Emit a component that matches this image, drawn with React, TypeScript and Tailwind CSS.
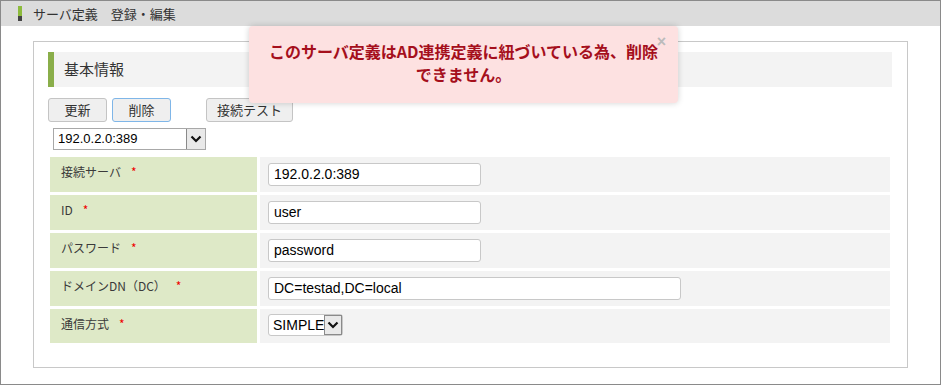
import * as React from "react";

const ROWS = [
  { label: "接続サーバ", value: "192.0.2.0:389", w: "w-[213px]" },
  { label: "ID", value: "user", w: "w-[213px]" },
  { label: "パスワード", value: "password", w: "w-[213px]" },
  { label: "ドメインDN（DC）", value: "DC=testad,DC=local", w: "w-[413px]" },
];

function Chevron() {
  return (
    <svg width="12" height="8" viewBox="0 0 12 8" fill="none">
      <path d="M1.5 1.5 6 6l4.5-4.5" stroke="#111" strokeWidth="2.2" />
    </svg>
  );
}

export default function App() {
  return (
    <div className="relative h-[385px] w-[941px] overflow-hidden border border-[#8a8a8a] bg-white font-['Noto_Sans_CJK_JP',sans-serif] text-[#333]">
      <div className="flex h-[25px] items-center bg-[#dcdcdc] pl-[17px]">
        <div className="flex h-[15px] w-[4px] flex-col">
          <div className="h-[10px] bg-[#8dbb3c]" />
          <div className="h-[5px] bg-[#444]" />
        </div>
        <span className="ml-[11px] text-[13px] leading-none">サーバ定義　登録・編集</span>
      </div>

      <div className="ml-[32px] mt-[15px] h-[327px] w-[875px] border border-[#c8c8c8] pl-[14px] pt-[10px]">
        <div className="flex h-[35px] w-[844px] items-center border-l-[6px] border-[#8aae4a] bg-[#f3f3f3] pl-[10px] text-[15px]">
          基本情報
        </div>

        <div className="mt-[11px] flex h-[24px] text-[13px]">
          <button className="w-[59px] rounded-[3px] border border-[#c4c4c4] bg-[#efefef]">更新</button>
          <button className="ml-[5px] w-[59px] rounded-[3px] border border-[#7fb6e8] bg-[#efefef]">削除</button>
          <button className="ml-[35px] w-[87px] rounded-[3px] border border-[#c4c4c4] bg-[#efefef]">接続テスト</button>
        </div>

        <div className="ml-[5px] mt-[6px] flex h-[22px] w-[153px] border border-[#a8a8a8] font-['Liberation_Sans',sans-serif] text-[13px] text-black">
          <span className="flex flex-1 items-center pl-[4px]">192.0.2.0:389</span>
          <span className="flex w-[19px] items-center justify-center border-l border-[#8a8a8a] bg-[#e9e9e9]">
            <Chevron />
          </span>
        </div>

        <div className="ml-[2px] mt-[7px] flex w-[840px] flex-col gap-[3px]">
          {ROWS.map((r) => (
            <div key={r.label} className="flex h-[35px] gap-[3px]">
              <div className="w-[207px] bg-[#dee9c7] pl-[11px] pt-[6px] text-[12px] text-[#3a3a3a]">
                {r.label}
                <span className="ml-[10px] text-[#e00]">*</span>
              </div>
              <div className="flex-1 bg-[#f3f3f3] pl-[8px] pt-[6px]">
                <div
                  className={`${r.w} flex h-[23px] items-center rounded-[3px] border border-[#c8c8c8] bg-white pl-[5px] font-['Liberation_Sans',sans-serif] text-[14px] text-black`}
                >
                  {r.value}
                </div>
              </div>
            </div>
          ))}
          <div className="flex h-[34px] gap-[3px]">
            <div className="w-[207px] bg-[#dee9c7] pl-[11px] pt-[6px] text-[12px] text-[#3a3a3a]">
              通信方式
              <span className="ml-[10px] text-[#e00]">*</span>
            </div>
            <div className="flex-1 bg-[#f3f3f3] pl-[8px] pt-[5px]">
              <div className="flex h-[22px] w-[75px] rounded-[3px] border border-[#c8c8c8] bg-white font-['Liberation_Sans',sans-serif] text-[14px] text-black">
                <span className="flex flex-1 items-center pl-[4px]">SIMPLE</span>
                <span className="flex w-[18px] items-center justify-center border border-[#8a8a8a] bg-[#e9e9e9]">
                  <Chevron />
                </span>
              </div>
            </div>
          </div>
        </div>
      </div>

      <div className="absolute left-[248px] top-[25px] flex h-[77px] w-[429px] flex-col items-center justify-center rounded-[4px] bg-[#fde1e1] pb-[3px] text-center text-[16px] font-bold leading-[23px] text-[#a50f1c] shadow-[0_0_6px_rgba(0,0,0,0.18)]">
        <span className="absolute right-[12px] top-[4px] font-['Liberation_Sans',sans-serif] text-[16px] font-bold text-[#bbb]">×</span>
        <div>このサーバ定義はAD連携定義に紐づいている為、削除</div>
        <div>できません。</div>
      </div>
    </div>
  );
}
